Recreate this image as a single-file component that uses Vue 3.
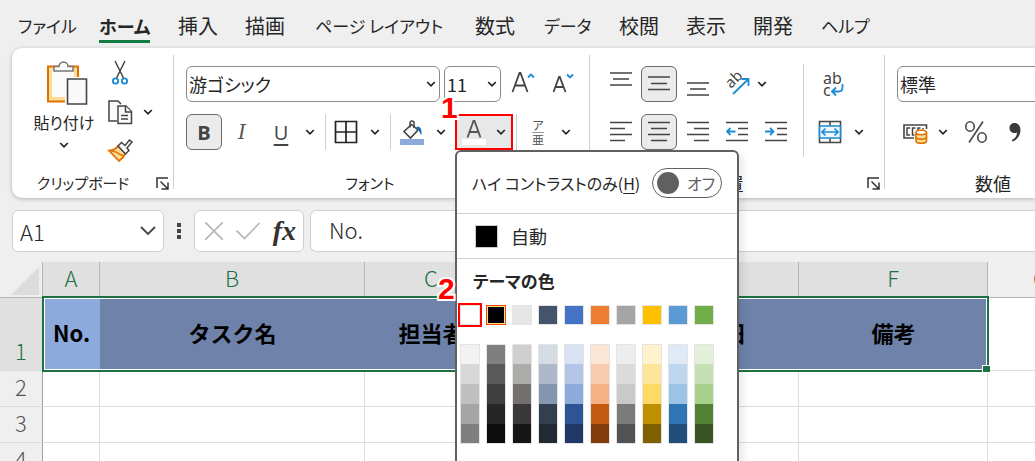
<script setup>
import { ref, h } from 'vue'

const tabs = [
  { name: 'ファイル', kana: true },
  { name: 'ホーム', kana: true, active: true },
  { name: '挿入' },
  { name: '描画' },
  { name: 'ページ レイアウト', kana: true },
  { name: '数式' },
  { name: 'データ', kana: true },
  { name: '校閲' },
  { name: '表示' },
  { name: '開発' },
  { name: 'ヘルプ', kana: true },
]

const cellRef = ref('A1')
const formula = ref('No.')

const themeColors = ['#ffffff', '#000000', '#e7e6e6', '#44546a', '#4472c4', '#ed7d31', '#a5a5a5', '#ffc000', '#5b9bd5', '#70ad47']
const shades = [
  ['#f2f2f2', '#d8d8d8', '#bfbfbf', '#a5a5a5', '#7f7f7f'],
  ['#7f7f7f', '#595959', '#3f3f3f', '#262626', '#0c0c0c'],
  ['#d0cece', '#aeabab', '#757070', '#3a3838', '#171616'],
  ['#d6dce4', '#adb9ca', '#8496b0', '#323f4f', '#222a35'],
  ['#d9e2f3', '#b4c6e7', '#8eaadb', '#2f5496', '#1f3864'],
  ['#fbe5d5', '#f7cbac', '#f4b183', '#c55a11', '#833c0b'],
  ['#ededed', '#dbdbdb', '#c9c9c9', '#7b7b7b', '#525252'],
  ['#fff2cc', '#fee599', '#ffd965', '#bf9000', '#7f6000'],
  ['#deebf6', '#bdd7ee', '#9cc3e5', '#2e75b5', '#1e4e79'],
  ['#e2efd9', '#c5e0b3', '#a8d08d', '#538135', '#375623'],
]

const columns = ['A', 'B', 'C', '', '', 'F', 'G']
const headings = ['No.', 'タスク名', '担当者', '', '完了日', '備考', '']

const Chevron = () =>
  h('svg', { width: 10, height: 10, viewBox: '0 0 10 10', fill: 'none', stroke: '#222', 'stroke-width': 1.7, 'aria-hidden': 'true' }, [
    h('path', { d: 'M1.2 3l3.8 3.8L8.8 3' }),
  ])
const Launcher = () =>
  h('svg', { width: 13, height: 13, viewBox: '0 0 13 13', fill: 'none', stroke: '#333', 'stroke-width': 1.5, 'aria-hidden': 'true' }, [
    h('path', { d: 'M1 11V1h11M4.5 4.5l7 7M12 5.5V12H5.5' }),
  ])
</script>

<template>
  <div class="app">
    <nav class="tabs">
      <a v-for="t in tabs" :key="t.name" href="#" :class="{ kana: t.kana, active: t.active }"><span>{{ t.name }}</span></a>
    </nav>

    <section class="ribbon">
      <div class="group clipboard">
        <div class="clip-body">
          <button class="paste">
            <svg width="42" height="46" viewBox="0 0 42 46" fill="none">
              <path d="M2 6.500h30V41.500H2z" fill="#fbdc96" stroke="#e07000" stroke-width="2" />
              <path d="M6 10h22v27H6z" fill="#fafafa" />
              <path d="M8 11V6.500h5a4.500 4.500 0 0 1 9 0h5V11z" fill="#fafafa" stroke="#777" stroke-width="1.500" />
              <path d="M19 17h22v27H19z" fill="#fff" />
              <path d="M21.500 19h19v25h-19z" fill="#f9f9f9" stroke="#444" stroke-width="1.600" />
            </svg>
            <span>貼り付け</span>
            <Chevron />
          </button>
          <div class="clip-tools">
            <button aria-label="切り取り">
              <svg width="18" height="26" viewBox="0 0 18 26" fill="none">
                <path d="M4 1l8.500 17M14 1L5.500 18" stroke="#444" stroke-width="1.500" />
                <circle cx="4.500" cy="21" r="2.700" stroke="#1e8bd4" stroke-width="1.800" />
                <circle cx="13.500" cy="21" r="2.700" stroke="#1e8bd4" stroke-width="1.800" />
              </svg>
            </button>
            <button class="copy" aria-label="コピー">
              <svg width="26" height="26" viewBox="0 0 26 26" fill="#fafafa" stroke="#444" stroke-width="1.500">
                <path d="M10 22H2V2h9l3 3" />
                <path d="M11 7h8l5.500 5.500V24.500H11z" />
                <path d="M18.500 7v6h6M14 16.500h7M14 20h7" />
              </svg>
              <Chevron />
            </button>
            <button aria-label="書式のコピー">
              <svg width="26" height="24" viewBox="0 0 26 24" fill="none">
                <path d="M2 12.500c4 0 7-1.500 9-4.500l7.500 7.500c-1.500 3-4 5.500-6.500 7.500z" fill="#fbdc96" stroke="#e07000" stroke-width="1.700" />
                <path d="M3 12.500c3 1 8 1.500 9 3.500l5 2" fill="#fff" stroke="#e07000" stroke-width="1.500" />
                <path d="M11 8l3.500-3.500 3.500 3L22.500 2l2.500 2-5 6 2 2.500-3.500 3.500z" fill="#fafafa" stroke="#444" stroke-width="1.500" />
              </svg>
            </button>
          </div>
        </div>
        <footer class="caption kana"><span>クリップボード</span></footer>
        <button class="launch" aria-label="クリップボードの設定"><Launcher /></button>
      </div>

      <div class="group font">
        <div class="row row-font">
          <label class="combo">
            <select aria-label="フォント名" class="kana"><option>游ゴシック</option></select>
            <Chevron />
          </label>
          <label class="combo">
            <select aria-label="フォント サイズ" class="size"><option>11</option></select>
            <Chevron />
          </label>
          <button class="tool" aria-label="フォント サイズの拡大">
            <svg width="24" height="24" viewBox="0 0 24 24" fill="none">
              <path d="M1.500 20L8.500 1h1l7 19M4 13.500h10" stroke="#444" stroke-width="1.800" />
              <path d="M17 5.500L20 2.500l3 3" stroke="#1e8bd4" stroke-width="1.800" />
            </svg>
          </button>
          <button class="tool" aria-label="フォント サイズの縮小">
            <svg width="24" height="24" viewBox="0 0 24 24" fill="none">
              <path d="M2.500 20L8 5h.8L14.500 20M4.500 15h8" stroke="#444" stroke-width="1.800" />
              <path d="M16 2.500l3 3 3-3" stroke="#1e8bd4" stroke-width="1.800" />
            </svg>
          </button>
        </div>
        <div class="row row-style">
          <button class="tool on bold">B</button>
          <button class="tool italic">I</button>
          <button class="tool under">U</button>
          <button class="tool" aria-label="下線の種類"><Chevron /></button>
          <i class="bar"></i>
          <button class="tool" aria-label="罫線">
            <svg width="24" height="24" viewBox="0 0 24 24" fill="#fafafa" stroke="#222" stroke-width="1.700">
              <path d="M1.500 1.500h21v21h-21zM12 1.500v21M1.500 12h21" />
            </svg>
          </button>
          <button class="tool" aria-label="罫線の種類"><Chevron /></button>
          <i class="bar"></i>
          <button class="tool" aria-label="塗りつぶしの色">
            <svg width="24" height="26" viewBox="0 0 24 26" fill="none">
              <path d="M11.500 5.500L4 12.500l6.500 6.500 7.500-8z" fill="#fafafa" stroke="#444" stroke-width="1.600" />
              <path d="M10 8.500V4a2 2 0 0 1 4 0v5" stroke="#444" stroke-width="1.500" />
              <path d="M16 8c4-1 6 1 5.500 8-1.500-1-2-4-3-5z" fill="#0f6cbd" />
              <path d="M0 20h24v6H0z" fill="#8eaadb" />
            </svg>
          </button>
          <button class="tool" aria-label="塗りつぶしの色の一覧"><Chevron /></button>
          <div class="font-color">
            <button class="tool" aria-label="フォントの色">
              <svg width="24" height="26" viewBox="0 0 24 26" fill="none">
                <path d="M5.500 18.500L11.500 2h1l6 16.500M7.500 13h9" stroke="#555" stroke-width="1.800" />
                <path d="M0 20h24v6H0z" fill="#fff" />
              </svg>
            </button>
            <button class="tool" aria-label="フォントの色の一覧"><Chevron /></button>
            <b class="mark mark-one">1</b>

            <div class="menu">
              <div class="contrast">
                <span class="kana">ハイ コントラストのみ(<u>H</u>)</span>
                <button class="switch kana" role="switch" aria-checked="false"><i></i>オフ</button>
              </div>
              <button class="auto"><i></i>自動</button>
              <h2 class="kana">テーマの色</h2>
              <div class="swatches">
                <button v-for="(c, i) in themeColors" :key="c" :class="{ picked: i === 0, current: i === 1 }" :style="{ background: c }" :aria-label="c"></button>
              </div>
              <div class="shades">
                <div v-for="(col, i) in shades" :key="i">
                  <button v-for="c in col" :key="c" :style="{ background: c }" :aria-label="c"></button>
                </div>
              </div>
              <b class="mark mark-two">2</b>
            </div>
          </div>
          <i class="bar"></i>
          <button class="tool phonetic"><span>ア</span><span>亜</span></button>
          <button class="tool" aria-label="ふりがなの設定"><Chevron /></button>
        </div>
        <footer class="caption kana"><span>フォント</span></footer>
      </div>

      <div class="group align">
        <div class="align-body">
          <div class="align-main">
            <div class="row">
              <button class="tool" aria-label="上揃え"><svg width="22" height="24" viewBox="0 0 22 24" stroke="#444" stroke-width="1.600"><path d="M0 1h22M3 7h16M0 13h22" /></svg></button>
              <button class="tool on" aria-label="上下中央揃え"><svg width="22" height="24" viewBox="0 0 22 24" stroke="#444" stroke-width="1.600"><path d="M0 5h22M3 11.500h16M0 17.500h22" /></svg></button>
              <button class="tool" aria-label="下揃え"><svg width="22" height="24" viewBox="0 0 22 24" stroke="#444" stroke-width="1.600"><path d="M0 11h22M3 17h16M0 23h22" /></svg></button>
              <button class="tool" aria-label="方向">
                <svg class="orient" width="26" height="26" viewBox="0 0 26 26" fill="none">
                  <text x="7" y="18" transform="rotate(-45 7 18)" class="slanted">ab</text>
                  <path d="M9 23L24 8.500M17.500 8H24.500v7" stroke="#1e8bd4" stroke-width="1.800" />
                </svg>
              </button>
              <button class="tool narrow" aria-label="方向の一覧"><Chevron /></button>
            </div>
            <div class="row">
              <button class="tool" aria-label="左揃え"><svg width="22" height="24" viewBox="0 0 22 24" stroke="#444" stroke-width="1.600"><path d="M0 2.500h22M0 8.500h15M0 14.500h22M0 20.500h15" /></svg></button>
              <button class="tool on" aria-label="中央揃え"><svg width="22" height="24" viewBox="0 0 22 24" stroke="#444" stroke-width="1.600"><path d="M0 2.500h22M3 8.500h16M0 14.500h22M3 20.500h16" /></svg></button>
              <button class="tool" aria-label="右揃え"><svg width="22" height="24" viewBox="0 0 22 24" stroke="#444" stroke-width="1.600"><path d="M0 2.500h22M7 8.500h15M0 14.500h22M7 20.500h15" /></svg></button>
              <button class="tool" aria-label="インデントを減らす"><svg width="22" height="24" viewBox="0 0 22 24" fill="none" stroke="#444" stroke-width="1.600"><path d="M0 2.500h22M12 8.500h10M12 14.500h10M0 20.500h22" /><path d="M9.500 11.500H1M4.500 8L1 11.500 4.500 15" stroke="#1e8bd4" stroke-width="1.800" /></svg></button>
              <button class="tool" aria-label="インデントを増やす"><svg width="22" height="24" viewBox="0 0 22 24" fill="none" stroke="#444" stroke-width="1.600"><path d="M0 2.500h22M12 8.500h10M12 14.500h10M0 20.500h22" /><path d="M0 11.500h8.500M5 8l3.500 3.500L5 15" stroke="#1e8bd4" stroke-width="1.800" /></svg></button>
            </div>
          </div>
          <i class="bar"></i>
          <div class="align-side">
            <button class="tool wrap">
              <span>ab</span>
              <span>c<svg width="13" height="13" viewBox="0 0 13 13" fill="none" stroke="#1e8bd4" stroke-width="1.800"><path d="M11.500 0v3.500q0 4-4 4H1.500M5 3.500l-4 4 4 4" /></svg></span>
            </button>
            <div class="merge">
              <button class="tool" aria-label="セルを結合して中央揃え">
                <svg width="24" height="24" viewBox="0 0 24 24" fill="#fafafa" stroke="#444" stroke-width="1.500">
                  <path d="M1.500 1.500h21v21h-21zM12 1v22" />
                  <path d="M1.500 6h21v12h-21z" fill="#eef7fe" stroke="#1e8bd4" stroke-width="1.700" />
                  <path d="M4.500 12h15M7.500 8.500L4 12l3.500 3.500M16.500 8.500L20 12l-3.500 3.500" fill="none" stroke="#1e8bd4" stroke-width="1.700" />
                </svg>
              </button>
              <button class="tool" aria-label="セル結合の一覧"><Chevron /></button>
            </div>
          </div>
        </div>
        <footer class="caption"><span>配置</span></footer>
        <button class="launch" aria-label="配置の設定"><Launcher /></button>
      </div>

      <div class="group number">
        <div class="row">
          <label class="combo">
            <select aria-label="表示形式"><option>標準</option></select>
            <Chevron />
          </label>
        </div>
        <div class="row row-number">
          <button class="tool" aria-label="通貨表示形式">
            <svg width="26" height="24" viewBox="0 0 26 24" fill="none">
              <path d="M12 18H2V5h22.500v4" stroke="#444" stroke-width="1.600" />
              <path d="M8 8H5v7h3M13.500 8h-3v7h2M16 11V8h2.500M21 8v1.500" stroke="#444" stroke-width="1.500" />
              <path d="M14 12.500V21c0 3 10.500 3 10.500 0v-8.500" fill="#fbdc96" stroke="#e07000" stroke-width="1.600" />
              <ellipse cx="19.250" cy="12.500" rx="5.250" ry="2.200" fill="#fff" stroke="#e07000" stroke-width="1.600" />
              <path d="M14 17c0 2.800 10.500 2.800 10.500 0" stroke="#e07000" stroke-width="1.600" />
            </svg>
          </button>
          <button class="tool" aria-label="通貨の一覧"><Chevron /></button>
          <button class="tool" aria-label="パーセント スタイル">
            <svg width="24" height="24" viewBox="0 0 24 24" fill="none" stroke="#444" stroke-width="1.600">
              <ellipse cx="6" cy="6.500" rx="4.200" ry="4.700" /><ellipse cx="18" cy="17.500" rx="4.200" ry="4.700" /><path d="M19 1.500L5 22.500" />
            </svg>
          </button>
          <button class="tool" aria-label="桁区切りスタイル">
            <svg width="14" height="22" viewBox="0 0 14 22" fill="#3b3a39"><path d="M6.500 2C10 2 12.500 4.500 12.500 9c0 6-4 10-8 11.500l-.7-1.500C7 17.500 9 15 9 11.500c-3 1.500-7.500 0-7.500-4.500 0-3 2.300-5 5-5z" /></svg>
          </button>
        </div>
        <footer class="caption"><span>数値</span></footer>
      </div>
    </section>

    <section class="formula-bar">
      <div class="name-box">
        <input v-model="cellRef" aria-label="名前ボックス" />
        <button aria-label="名前の一覧"><svg width="16" height="10" viewBox="0 0 16 10" fill="none" stroke="#444" stroke-width="1.800"><path d="M1 1l7 7 7-7" /></svg></button>
      </div>
      <svg class="dots" width="4" height="16" viewBox="0 0 4 16" fill="#444"><path d="M0 0h4v4H0zM0 6h4v4H0zM0 12h4v4H0z" /></svg>
      <div class="edit">
        <button aria-label="キャンセル"><svg width="18" height="18" viewBox="0 0 18 18" stroke="#b5b5b5" stroke-width="1.600"><path d="M0 0l18 18M18 0L0 18" /></svg></button>
        <button aria-label="入力"><svg width="24" height="18" viewBox="0 0 24 18" fill="none" stroke="#b5b5b5" stroke-width="1.600"><path d="M.5 8.500l8 8L23.500 1" /></svg></button>
        <button class="fx">fx</button>
      </div>
      <input v-model="formula" class="formula" aria-label="数式バー" />
    </section>

    <main class="sheet">
      <table>
        <colgroup>
          <col class="w-head" /><col class="w-a" /><col class="w-b" /><col class="w-c" /><col class="w-d" /><col class="w-e" /><col class="w-f" /><col class="w-g" />
        </colgroup>
        <thead>
          <tr>
            <th class="corner"><svg width="28" height="28" viewBox="0 0 28 28" fill="#dcdcdc"><path d="M28 0v28H0z" /></svg></th>
            <th v-for="(c, i) in columns" :key="i" :class="{ picked: i < 6 }">{{ c }}</th>
          </tr>
        </thead>
        <tbody>
          <tr class="first">
            <th class="picked">1</th>
            <td v-for="(t, i) in headings" :key="i">{{ t }}</td>
          </tr>
          <tr v-for="n in [2, 3, 4]" :key="n">
            <th>{{ n }}</th>
            <td v-for="i in 7" :key="i"></td>
          </tr>
        </tbody>
      </table>
      <div class="selection"><i></i></div>
    </main>
  </div>
</template>

<style>
body {
  margin: 0;
  background: #efefef;
}
</style>

<style scoped>
.app {
  display: flex;
  flex-direction: column;
  height: 100vh;
  overflow: hidden;
  background: #efefef;
  color: #262626;
  font-family: "Noto Sans CJK JP", sans-serif;
  font-size: 18px;
  line-height: 24px;
}
* {
  box-sizing: border-box;
}
button,
input,
select {
  margin: 0;
  padding: 0;
  border: 0;
  background: none;
  color: inherit;
  font: inherit;
  border-radius: 0;
  outline: none;
}
svg {
  display: block;
  flex: none;
}
.kana {
  font-feature-settings: "palt";
}

.tabs {
  display: grid;
  grid-template-columns: 81px 79px 67px 70px 160px 69px 75px 67px 67px 68px 1fr;
  flex: none;
  height: 48px;
  padding: 14px 0 0 18px;
  white-space: nowrap;
}
.tabs a {
  color: inherit;
  font-size: 20px;
  text-decoration: none;
}
.tabs a.kana {
  font-size: 17px;
}
.tabs .active.kana {
  font-size: 18px;
}
.tabs span {
  display: inline-block;
  height: 29px;
}
.tabs .active span {
  border-bottom: 3px solid #107c41;
  font-weight: 700;
}

.ribbon {
  position: relative;
  z-index: 2;
  display: flex;
  flex: none;
  margin-left: 12px;
  background: #fff;
  border-radius: 10px 0 0 10px;
  box-shadow: 0 1px 4px #00000040;
}
.group {
  position: relative;
  display: flex;
  flex-direction: column;
  flex: none;
  gap: 12px;
  height: 150px;
  padding-top: 18px;
}
.group:not(:last-child)::after {
  content: "";
  position: absolute;
  top: 7px;
  right: 0;
  width: 1px;
  height: 134px;
  background: #d0d0d0;
}
.clipboard {
  width: 162px;
}
.font {
  z-index: 1;
  width: 416px;
  padding-left: 12px;
}
.align {
  width: 295px;
}
.number {
  width: 216px;
  padding-left: 12px;
}
.caption {
  margin-top: 9px;
  text-align: center;
}
.caption.kana {
  font-size: 15px;
}
.clipboard .caption {
  padding-right: 20px;
}
.font .caption {
  padding-right: 36px;
}
.align .caption {
  padding-right: 24px;
}
.number .caption {
  padding-right: 12px;
}
.launch {
  position: absolute;
  right: 5px;
  bottom: 8px;
}

.clip-body {
  display: flex;
  height: 84px;
}
.paste {
  display: flex;
  flex-direction: column;
  align-items: center;
  width: 95px;
  margin-top: -6px;
  padding-left: 9px;
  font-size: 16px;
  font-feature-settings: "palt";
}
.paste svg:first-child {
  margin-left: 6px;
}
.paste span {
  margin: 4px 0 6px;
}
.clip-tools {
  display: flex;
  flex-direction: column;
  gap: 14px;
  margin-top: -6px;
}
.clip-tools button {
  display: flex;
  align-items: center;
  gap: 10px;
  height: 25px;
}
.clip-tools button:first-child {
  padding-left: 4px;
}

.row {
  display: flex;
  height: 36px;
}
.row-font {
  gap: 4px;
}
.combo {
  display: grid;
  align-items: center;
  border: 1px solid #8a8a8a;
  border-radius: 6px;
  background: #fff;
}
.combo > * {
  grid-area: 1 / 1;
}
.combo select {
  width: 100%;
  height: 34px;
  padding-left: 2px;
  appearance: none;
}
.combo svg {
  justify-self: end;
  margin-right: 3px;
  pointer-events: none;
}
.row-font .combo:first-child {
  width: 254px;
}
.row-font .combo:nth-child(2) {
  width: 57px;
}
.number .combo {
  width: 190px;
}
.tool {
  display: flex;
  align-items: center;
  justify-content: center;
  min-width: 0;
}
.row-font .tool {
  width: 36px;
}
.on {
  border: 1px solid #6a6a6a;
  border-radius: 6px;
  background: #ebebeb;
}
.row-style {
  display: grid;
  grid-template-columns: 36px 40px 38px 20px 11px 30px 28px 2px 42px 16px 64px 6px 38px 18px;
}
.bar {
  justify-self: center;
  width: 1px;
  background: #d0d0d0;
}
.bold {
  font: 700 20px "Open Sans", sans-serif;
  color: #444;
}
.italic {
  font: italic 20px "DejaVu Serif", serif;
  color: #555;
}
.under {
  font: 20px "Open Sans", sans-serif;
  color: #444;
  text-decoration: underline;
  text-underline-offset: 4px;
}
.phonetic {
  flex-direction: column;
  color: #555;
  font-size: 12px;
  line-height: 14px;
}
.phonetic span + span {
  border-top: 1px solid #999;
}
.font-color {
  position: relative;
  z-index: 1;
  display: grid;
  grid-template-columns: 34px 20px;
  margin-left: 6px;
  border: 2px solid #f00;
  background: #e8e8e8;
}

.align-body {
  display: flex;
  height: 84px;
  padding-left: 11px;
}
.align-main {
  display: flex;
  flex-direction: column;
  gap: 12px;
  width: 196px;
}
.align-main .row {
  display: grid;
  grid-template-columns: 40px 36px 42px 36px 42px;
}
.align-main .narrow {
  width: 14px;
}
.orient {
  overflow: visible;
}
.slanted {
  fill: #444;
  font: 15px "Noto Sans", sans-serif;
}
.align-body .bar {
  height: 93px;
  margin: -2px 10px 0 6px;
}
.align-side {
  display: flex;
  flex-direction: column;
  gap: 12px;
}
.wrap {
  flex-direction: column;
  align-items: flex-start;
  height: 36px;
  padding-left: 9px;
  color: #444;
  font: 16px/12px "Noto Sans", sans-serif;
}
.wrap span {
  display: flex;
}
.merge {
  display: grid;
  grid-template-columns: 32px 26px;
  height: 36px;
}
.row-number {
  display: grid;
  grid-template-columns: 36px 20px 46px 32px;
}

.menu {
  position: absolute;
  top: 34px;
  left: -2px;
  width: 284px;
  height: 340px;
  border: 2px solid #606060;
  border-radius: 6px;
  background: #fff;
  box-shadow: 4px 4px 10px #00000018;
  white-space: nowrap;
}
.contrast {
  display: flex;
  align-items: center;
  justify-content: space-between;
  height: 62px;
  padding: 0 15px;
  border-bottom: 1px solid #d0d0d0;
  font-size: 16px;
}
.contrast u {
  text-underline-offset: 3px;
}
.switch {
  display: flex;
  align-items: center;
  gap: 8px;
  width: 70px;
  height: 30px;
  padding-left: 4px;
  border: 1px solid #606060;
  border-radius: 15px;
  color: #606060;
}
.switch i {
  width: 22px;
  height: 22px;
  border-radius: 50%;
  background: #606060;
}
.auto {
  display: flex;
  align-items: center;
  gap: 13px;
  width: 100%;
  height: 45px;
  padding-left: 18px;
  border-bottom: 1px solid #d0d0d0;
}
.auto i {
  width: 23px;
  height: 23px;
  border: 1px solid #ccc;
  background: #000;
}
.menu h2 {
  margin: 10px 0 12px 16px;
  font-size: 17px;
  line-height: 24px;
}
.swatches,
.shades {
  display: grid;
  grid-template-columns: repeat(10, 20px);
  gap: 6px;
  padding-left: 3px;
}
.swatches button {
  height: 20px;
  border: 1px solid #e4e4e4;
}
.swatches .picked {
  outline: 2px solid #f00;
}
.swatches .current {
  border-color: #f04a10;
  box-shadow: inset 0 0 0 1px #ffe08a;
}
.shades {
  margin-top: 19px;
}
.shades div {
  display: flex;
  flex-direction: column;
  border: 1px solid #e4e4e4;
}
.shades button {
  height: 20px;
}
.shades button:first-child,
.shades button:last-child {
  height: 19px;
}
.mark {
  position: absolute;
  color: #f00;
  font: 700 30px/30px "Liberation Sans", sans-serif;
  -webkit-text-stroke: 4px #fff;
  paint-order: stroke fill;
}
.mark-one {
  top: -23px;
  left: -16px;
}
.mark-two {
  top: 122px;
  left: -19px;
}

.formula-bar {
  display: flex;
  align-items: center;
  flex: none;
  height: 42px;
  margin: 12px 0 10px 12px;
  font-size: 22px;
  font-weight: 300;
}
.name-box,
.edit,
.formula {
  height: 42px;
  border: 1px solid #d0d0d0;
  border-radius: 6px;
  background: #fff;
}
.name-box {
  display: flex;
  align-items: center;
  width: 152px;
  padding: 0 7px;
}
.name-box input {
  flex: 1;
  min-width: 0;
}
.dots {
  margin: 0 13px;
}
.edit {
  display: flex;
  align-items: center;
  justify-content: space-between;
  width: 110px;
  padding: 0 7px 0 10px;
}
.fx {
  font: italic 700 28px/30px "Liberation Serif", serif;
  color: #333;
}
.formula {
  flex: 1;
  min-width: 0;
  margin-left: 6px;
  padding: 0 0 4px 18px;
  border-right: 0;
  border-radius: 6px 0 0 6px;
}

.sheet {
  position: relative;
  flex: 1;
  min-height: 0;
  overflow: hidden;
}
table {
  width: 1094px;
  table-layout: fixed;
  border-collapse: separate;
  border-spacing: 0;
  font-size: 22px;
  line-height: 24px;
}
.w-head { width: 43px; }
.w-a { width: 57px; }
.w-b { width: 265px; }
.w-c { width: 133px; }
.w-d { width: 130px; }
.w-e { width: 171px; }
.w-f { width: 189px; }
.w-g { width: 106px; }
th,
td {
  height: 36px;
  padding: 0 0 5px;
  border-right: 1px solid #dcdcdc;
  border-bottom: 1px solid #dcdcdc;
  text-align: center;
}
th {
  background: #efefef;
  color: #555;
  font-weight: 300;
}
thead th {
  border-color: #b4b4b4;
}
tbody th {
  border-right-color: #a0a0a0;
}
th.picked {
  background: #e0e0e0;
  color: #1e7145;
}
.corner {
  padding: 0;
}
.corner svg {
  margin: 2px 0 0 11px;
}
td {
  background: #fff;
}
.first th {
  height: 73px;
  padding-bottom: 8px;
  vertical-align: bottom;
}
.first td {
  border-right: 0;
  background: #6f83aa;
  color: #000;
  font-weight: 700;
}
.first td:nth-child(2) {
  background: #8ea9db;
}
.first td:last-child {
  background: #fff;
}
.selection {
  position: absolute;
  top: 34px;
  left: 42px;
  width: 947px;
  height: 76px;
  border: 2px solid #1e7145;
  box-shadow: inset 0 0 0 1px #fff;
}
.selection i {
  position: absolute;
  right: -3px;
  bottom: -3px;
  width: 8px;
  height: 8px;
  border: 1px solid #fff;
  border-right-width: 0;
  background: #1e7145;
}
</style>
